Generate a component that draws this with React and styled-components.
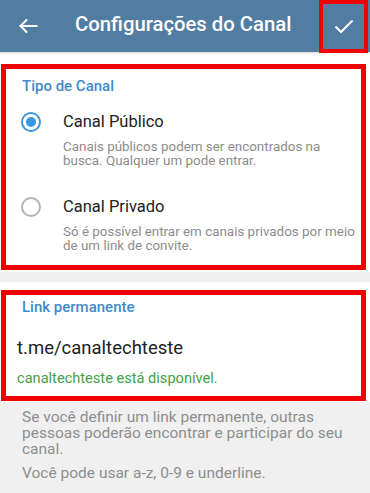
import React from "react";
import styled, { createGlobalStyle } from "styled-components";

const Global = createGlobalStyle`
  html, body { margin: 0; padding: 0; background: #f0f0f0; }
  body { font-family: Roboto, "Noto Sans", "Liberation Sans", sans-serif; -webkit-font-smoothing: antialiased; }
  * { box-sizing: border-box; }
`;

const Page = styled.div`
  width: 370px;
  min-height: 493px;
  background: #f0f0f0;
  display: flex;
  flex-direction: column;
`;

const Header = styled.header`
  height: 52px;
  background: #527da3;
  display: flex;
  align-items: flex-start;
  box-shadow: 0 1px 2px rgba(0, 0, 0, 0.18);
  position: relative;
  z-index: 1;
`;

const IconButton = styled.button`
  border: none;
  background: transparent;
  padding: 0;
  display: flex;
  align-items: center;
  justify-content: center;
  color: #fff;
  cursor: pointer;
`;

const BackButton = styled(IconButton)`
  width: 56px;
  height: 52px;
`;

const Title = styled.h1`
  margin: 0;
  flex: 1;
  padding-left: 19px;
  font-size: 20.3px;
  font-weight: 500;
  line-height: 48px;
  color: #fff;
  white-space: nowrap;
`;

const Marked = styled.div`
  border: ${(p) => p.$bw || 5}px solid #f20000;
`;

const DoneButton = styled(IconButton)`
  width: 49px;
  height: 53px;
  margin-right: 2px;
  border: 4px solid #f20000;
`;

const WhiteSection = styled.section`
  background: #fff;
  padding: ${(p) => p.$pad};
`;

const Gap = styled.div`
  height: ${(p) => p.$h}px;
`;

const SectionTitle = styled.div`
  font-size: 15px;
  font-weight: 500;
  line-height: 20px;
  color: #3e8bc8;
  padding: ${(p) => p.$pad};
`;

const Options = styled.div`
  display: flex;
  flex-direction: column;
  gap: 30px;
  padding: 16px 0 13px 15px;
`;

const OptionRow = styled.label`
  display: grid;
  grid-template-columns: 20px 1fr;
  column-gap: 22px;
  align-items: start;
`;

const Radio = styled.span`
  width: 20px;
  height: 20px;
  border-radius: 50%;
  border: 2px solid ${(p) => (p.$checked ? "#3a98de" : "#b3b3b3")};
  display: flex;
  align-items: center;
  justify-content: center;
  &::after {
    content: "";
    width: 10px;
    height: 10px;
    border-radius: 50%;
    background: ${(p) => (p.$checked ? "#3a98de" : "transparent")};
  }
`;

const OptionText = styled.div`
  display: flex;
  flex-direction: column;
  gap: 8px;
`;

const OptionTitle = styled.div`
  font-size: 16.5px;
  line-height: 20px;
  color: #222;
`;

const OptionDesc = styled.div`
  font-size: 13.4px;
  line-height: 13.5px;
  color: #8c8c8c;
`;

const LinkBody = styled.div`
  display: flex;
  flex-direction: column;
  padding: 2px 0 9px 11px;
`;

const LinkValue = styled.div`
  margin-top: 17px;
  font-size: 18.5px;
  line-height: 24px;
  color: #222;
`;

const Available = styled.div`
  margin-top: 9px;
  font-size: 14.6px;
  line-height: 18px;
  color: #45a04a;
`;

const Info = styled.div`
  padding: 7px 16px 0 22px;
  display: flex;
  flex-direction: column;
  gap: 8px;
`;

const InfoText = styled.p`
  margin: 0;
  font-size: 15.5px;
  line-height: 16px;
  color: #8e8e8e;
`;

const BackIcon = () => (
  <svg width="20" height="16" viewBox="0 0 20 16" fill="none" stroke="#fff" strokeWidth="2" strokeLinecap="square">
    <path d="M2.5 8H18.5" />
    <path d="M8.5 2L2.5 8L8.5 14" strokeLinecap="round" strokeLinejoin="round" />
  </svg>
);

const CheckIcon = () => (
  <svg width="20" height="15" viewBox="0 0 20 15" fill="none" stroke="#fff" strokeWidth="2">
    <path d="M1.5 7.5L7 13L18.5 1.5" />
  </svg>
);

const options = [
  {
    title: "Canal Público",
    desc: "Canais públicos podem ser encontrados na busca. Qualquer um pode entrar.",
    checked: true,
  },
  {
    title: "Canal Privado",
    desc: "Só é possível entrar em canais privados por meio de um link de convite.",
    checked: false,
  },
];

export default function App() {
  return (
    <>
      <Global />
      <Page>
        <Header>
          <BackButton aria-label="Voltar">
            <BackIcon />
          </BackButton>
          <Title>Configurações do Canal</Title>
          <DoneButton aria-label="Concluir">
            <CheckIcon />
          </DoneButton>
        </Header>

        <WhiteSection $pad="12px 4px 2px 1px">
          <Marked>
            <SectionTitle $pad="7px 16px 0">Tipo de Canal</SectionTitle>
            <Options>
              {options.map((o) => (
                <OptionRow key={o.title}>
                  <Radio $checked={o.checked} />
                  <OptionText>
                    <OptionTitle>{o.title}</OptionTitle>
                    <OptionDesc>{o.desc}</OptionDesc>
                  </OptionText>
                </OptionRow>
              ))}
            </Options>
          </Marked>
        </WhiteSection>

        <Gap $h={10} />

        <WhiteSection $pad="8px 4px 1px 1px">
          <Marked>
            <SectionTitle $pad="2px 16px 0">Link permanente</SectionTitle>
            <LinkBody>
              <LinkValue>t.me/canaltechteste</LinkValue>
              <Available>canaltechteste está disponível.</Available>
            </LinkBody>
          </Marked>
        </WhiteSection>

        <Info>
          <InfoText>
            Se você definir um link permanente, outras pessoas poderão encontrar e participar do seu canal.
          </InfoText>
          <InfoText>Você pode usar a-z, 0-9 e underline.</InfoText>
        </Info>
      </Page>
    </>
  );
}
